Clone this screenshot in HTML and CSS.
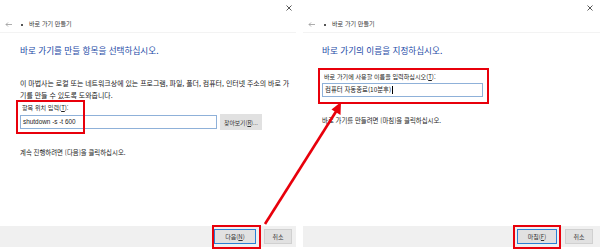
FILE: index.html
```html
<!DOCTYPE html>
<html lang="ko">
<head>
<meta charset="utf-8">
<link rel="stylesheet" href="styles.css">
</head>
<body>
<div class="page">
  <section class="panel">
    <div class="topbar"><svg class="close" width="6" height="6" viewBox="0 0 6 6"><path d="M0.5 0.5L5.5 5.5M5.5 0.5L0.5 5.5" stroke="#444" stroke-width="0.9"/></svg></div>
    <div class="titlebar">
      <svg class="back" width="7" height="5" viewBox="0 0 7 5"><path d="M7 2.5H1M3 0.5L1 2.5L3 4.5" stroke="#999" stroke-width="0.8" fill="none"/></svg>
      <span class="appicon"></span>
      <span class="wtitle">바로 가기 만들기</span>
    </div>
    <div class="body">
      <h1 class="heading">바로 가기를 만들 항목을 선택하십시오.</h1>
      <p class="desc">이 마법사는 로컬 또는 네트워크상에 있는 프로그램, 파일, 폴더, 컴퓨터, 인터넷 주소의 바로 가<br>기를 만들 수 있도록 도와줍니다.</p>
      <div class="label l1">항목 위치 입력(<u>T</u>):</div>
      <div class="inrow">
        <div class="input w1">shutdown -s -t 600</div>
        <div class="btn browse">찾아보기(<u>R</u>)...</div>
      </div>
      <p class="note n1">계속 진행하려면 [다음]을 클릭하십시오.</p>
    </div>
    <div class="footer">
      <div class="btn primary">다음(<u>N</u>)</div>
      <div class="btn">취소</div>
    </div>
  </section>
  <section class="panel right">
    <div class="topbar"><svg class="close" width="6" height="6" viewBox="0 0 6 6"><path d="M0.5 0.5L5.5 5.5M5.5 0.5L0.5 5.5" stroke="#444" stroke-width="0.9"/></svg></div>
    <div class="titlebar">
      <svg class="back" width="7" height="5" viewBox="0 0 7 5"><path d="M7 2.5H1M3 0.5L1 2.5L3 4.5" stroke="#999" stroke-width="0.8" fill="none"/></svg>
      <span class="appicon"></span>
      <span class="wtitle">바로 가기 만들기</span>
    </div>
    <div class="body">
      <h1 class="heading">바로 가기의 이름을 지정하십시오.</h1>
      <div class="label l2">바로 가기에 사용할 이름을 입력하십시오(<u>T</u>):</div>
      <div class="inrow">
        <div class="input w2">컴퓨터 자동종료(10분후)<span class="caret"></span></div>
      </div>
      <p class="note n2">바로 가기를 만들려면 [마침]을 클릭하십시오.</p>
    </div>
    <div class="footer">
      <div class="btn primary">마침(<u>F</u>)</div>
      <div class="btn">취소</div>
    </div>
  </section>

  <div class="mark m1"></div>
  <div class="mark m2"></div>
  <div class="mark m3"></div>
  <div class="mark m4"></div>
  <svg class="arrow" width="600" height="249" viewBox="0 0 600 249">
    <line x1="265" y1="224" x2="337" y2="110" stroke="#e8000b" stroke-width="2.6"/>
    <polygon points="341,102 340.5,115 331.5,109.5" fill="#e8000b"/>
  </svg>
</div>
</body>
</html>
```

FILE: styles.css
```css
* { box-sizing: border-box; }
html, body { margin: 0; padding: 0; background: #fff; }
body {
  font-family: "Noto Sans CJK KR", "Noto Sans", sans-serif;
  color: #222;
  width: 600px;
  height: 249px;
  overflow: hidden;
}
.page {
  position: relative;
  width: 600px;
  height: 249px;
  display: flex;
  gap: 7px;
}
.panel {
  width: 296px;
  height: 249px;
  display: flex;
  flex-direction: column;
  background: #fff;
}
.panel.right { width: 297px; }
.topbar {
  height: 16px;
  display: flex;
  justify-content: flex-end;
  align-items: flex-start;
  padding: 5px 4px 0 0;
}
.panel.right .topbar { padding-right: 7px; }
.titlebar {
  height: 17px;
  display: flex;
  align-items: center;
  padding-left: 5px;
  border-bottom: 1px solid #f3f3f3;
}
.back { margin-right: 9px; }
.appicon {
  width: 2px;
  height: 2px;
  background: #555;
  margin-right: 6px;
  margin-top: 2px;
}
.wtitle { font-size: 6.1px; line-height: 8px; color: #333; }
.body { padding: 11px 0 0 20px; }
.panel.right .body { padding-left: 19px; }
.heading {
  margin: 0;
  font-size: 8.6px;
  line-height: 12px;
  font-weight: 400;
  color: #1c4aa6;
}
.desc {
  margin: 21px 0 0;
  font-size: 6.95px;
  line-height: 12px;
  white-space: nowrap;
}
.label { font-size: 6.1px; line-height: 10px; padding-left: 2px; }
.l1 { margin-top: 2px; }
.l2 { margin-top: 16px; }
.inrow { display: flex; align-items: center; gap: 3px; margin-top: 1px; }
.input {
  height: 14px;
  border: 1px solid #8fb1d9;
  font-family: "Liberation Sans", "Noto Sans CJK KR", sans-serif;
  font-size: 6.4px;
  line-height: 12px;
  padding-left: 2px;
  display: flex;
  align-items: center;
}
.w1 { width: 197px; }
.w2 { width: 161px; font-family: "Noto Sans CJK KR", sans-serif; }
.caret { width: 1px; height: 8px; background: #000; margin-left: 1px; }
.btn {
  height: 15px;
  padding: 0;
  background: #e1e1e1;
  border: 1px solid #d0d0d0;
  font-size: 6px;
  line-height: 13px;
  display: flex;
  align-items: center;
  justify-content: center;
  color: #333;
  white-space: nowrap;
}
.browse { width: 42px; height: 16px; border-color: #e1e1e1; font-size: 5.8px; }
.note { margin: 17px 0 0; font-size: 6.4px; line-height: 12px; }
.n2 { margin-top: 18px; }
.footer {
  margin-top: auto;
  margin-bottom: 2px;
  height: 21px;
  background: #f0f0f0;
  display: flex;
  justify-content: flex-end;
  align-items: center;
  gap: 8px;
  padding-right: 4px;
}
.panel.right .footer { padding-right: 7px; }
.footer .btn { width: 28px; }
.footer .btn.primary { width: 42px; border-color: #2a7fd4; }
.panel.right .footer .btn.primary { width: 40px; }
.mark {
  position: absolute;
  border: 2px solid #e8000b;
}
.m1 { left: 16px; top: 100px; width: 69px; height: 34px; }
.m2 { left: 318px; top: 68px; width: 171px; height: 36px; }
.m3 { left: 212px; top: 225px; width: 49px; height: 24px; }
.m4 { left: 513px; top: 225px; width: 48px; height: 24px; }
.arrow { position: absolute; left: 0; top: 0; pointer-events: none; }
```
